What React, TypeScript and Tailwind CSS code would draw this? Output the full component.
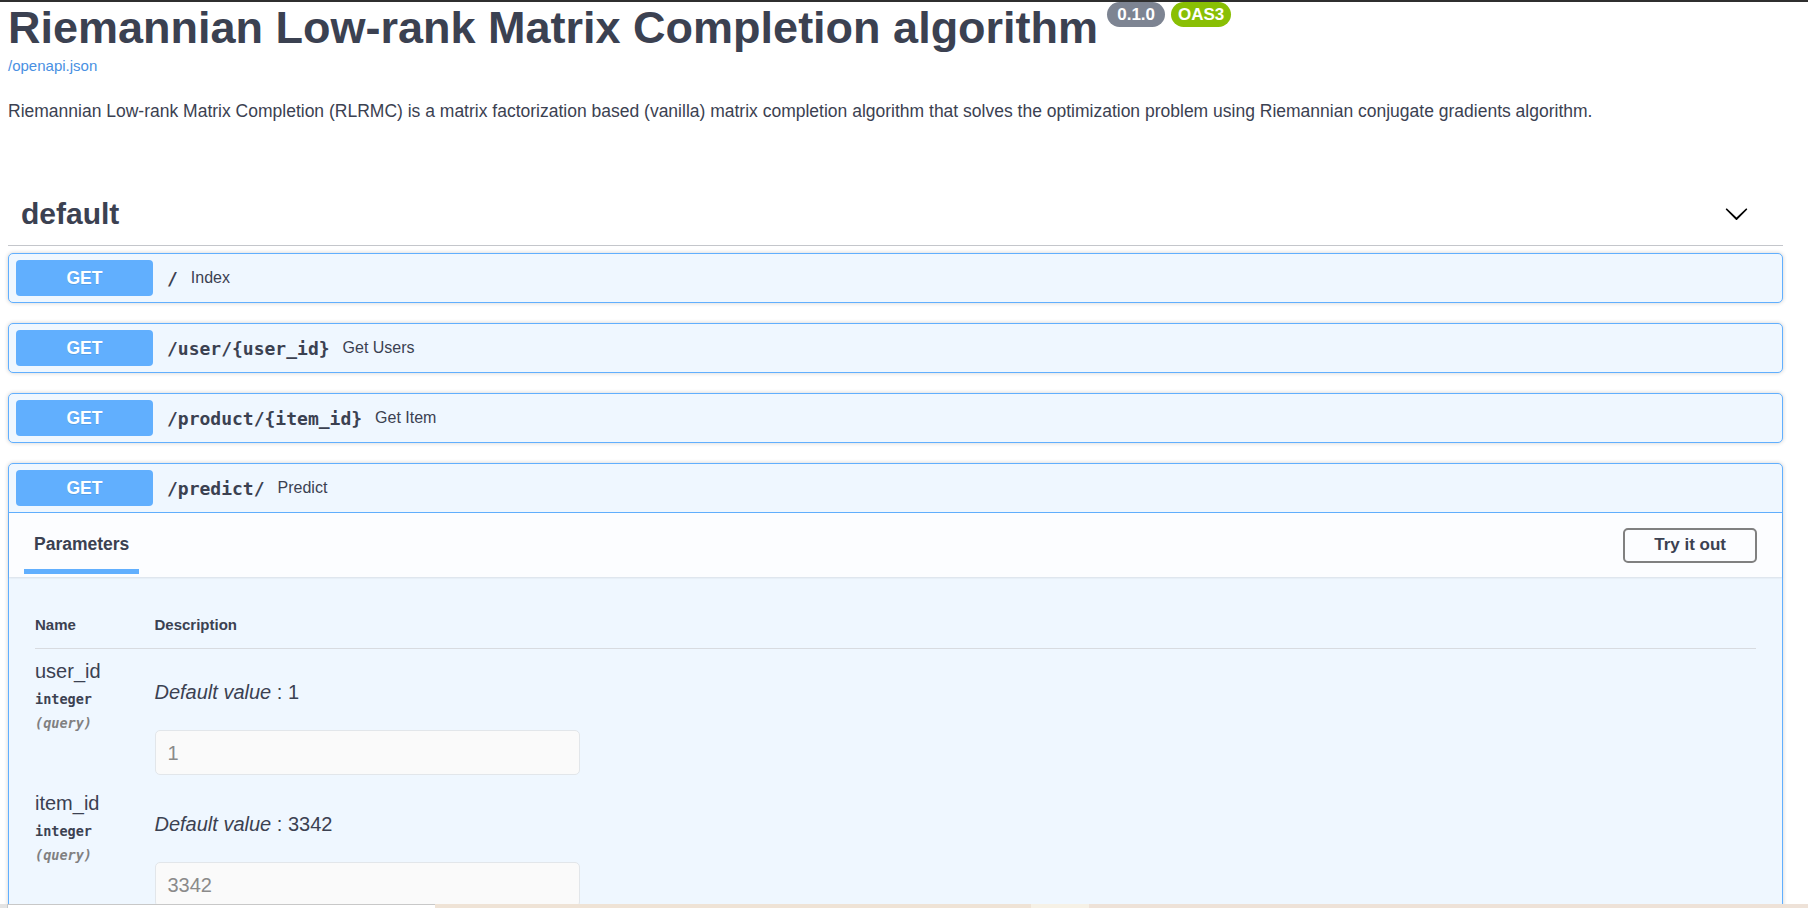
import React from "react";

const ops = [
  { path: "/", summary: "Index" },
  { path: "/user/{user_id}", summary: "Get Users" },
  { path: "/product/{item_id}", summary: "Get Item" },
];

const params = [
  { name: "user_id", value: "1" },
  { name: "item_id", value: "3342" },
];

function SummaryRow({ path, summary, open }: { path: string; summary: string; open?: boolean }) {
  return (
    <div className={`flex items-center pl-[7px] ${open ? "h-[49px] border-b border-[#61affe]" : "h-[48px]"}`}>
      <span className="flex h-[36px] w-[137px] items-center justify-center rounded-[4px] bg-[#61affe] text-[17.5px] font-bold text-white [text-shadow:0_1px_0_rgba(0,0,0,0.1)]">
        GET
      </span>
      <span className="pl-[14px] pr-[13px] font-['DejaVu_Sans_Mono',monospace] text-[18px] font-bold text-[#3b4151]">
        {path}
      </span>
      <span className="text-[16px] text-[#3b4151]">{summary}</span>
    </div>
  );
}

function Chevron() {
  return (
    <svg width="25" height="25" viewBox="0 0 20 20" className="shrink-0">
      <path
        fill="#000"
        d="M17.418 6.109c.272-.268.709-.268.979 0s.271.701 0 .969l-7.908 7.83c-.27.268-.707.268-.979 0l-7.908-7.83c-.27-.268-.27-.701 0-.969.271-.268.709-.268.979 0L10 13.25l7.418-7.141z"
      />
    </svg>
  );
}

export default function App() {
  return (
    <div className="relative h-[908px] overflow-hidden bg-white font-['Liberation_Sans',Arial,sans-serif] text-[#3b4151]">
      <div className="h-[2px] bg-[#2f2f2f]" />
      <div className="w-[1783px] pl-[8px]">
        {/* info */}
        <div className="flex items-start">
          <h2 className="text-[45px] font-bold leading-[51px]">Riemannian Low-rank Matrix Completion algorithm</h2>
          <span className="ml-[9px] flex h-[25px] w-[58px] items-center justify-center rounded-full bg-[#7d8492] text-[17px] font-bold text-white">
            0.1.0
          </span>
          <span className="ml-[6px] flex h-[25px] w-[60px] items-center justify-center rounded-full bg-[#89bf04] text-[17px] font-bold text-white">
            OAS3
          </span>
        </div>
        <a className="mt-[3px] block text-[15px] leading-[20px] text-[#4990e2]">/openapi.json</a>
        <p className="mt-[23px] text-[17.5px] leading-[24px]">
          Riemannian Low-rank Matrix Completion (RLRMC) is a matrix factorization based (vanilla) matrix completion algorithm that solves the optimization problem using Riemannian conjugate gradients algorithm.
        </p>

        {/* tag */}
        <div className="mt-[58px] flex h-[65px] items-center justify-between border-b border-[#c4c6cb] pl-[13px] pr-[34px]">
          <h3 className="text-[30px] font-bold">default</h3>
          <Chevron />
        </div>

        <div className="mt-[7px] flex flex-col gap-[20px]">
          {ops.map((op) => (
            <div
              key={op.path}
              className="rounded-[5px] border border-[#61affe] bg-[#eff7ff] shadow-[0_0_4px_rgba(0,0,0,0.19)]"
            >
              <SummaryRow path={op.path} summary={op.summary} />
            </div>
          ))}

          <div className="rounded-[5px] border border-[#61affe] bg-[#eff7ff] shadow-[0_0_4px_rgba(0,0,0,0.19)]">
            <SummaryRow path="/predict/" summary="Predict" open />

            <div className="flex h-[64px] items-center justify-between bg-[#fcfdff] pl-[25px] pr-[25px] shadow-[0_1px_2px_rgba(0,0,0,0.1)]">
              <div className="flex flex-col self-stretch justify-end pb-[3px]">
                <h4 className="mb-[15px] text-[17.5px] font-bold leading-[20px]">Parameters</h4>
                <div className="-mx-[10px] h-[5px] bg-[#61affe]" />
              </div>
              <button className="h-[35px] rounded-[5px] border-2 border-[#808080] px-[29px] text-[17px] font-bold text-[#3b4151]">
                Try it out
              </button>
            </div>

            <div className="pb-[60px] pl-[26px] pr-[26px] pt-[25px]">
              <div className="grid grid-cols-[119.5px_1fr] border-b border-[#d8dbe0] pb-[15px] pt-[15px] text-[15px] font-bold leading-[16px]">
                <span>Name</span>
                <span>Description</span>
              </div>
              {params.map((p) => (
                <div key={p.name} className="grid grid-cols-[119.5px_1fr] pb-[6px] pt-[11px]">
                  <div>
                    <div className="text-[20px] leading-[23px]">{p.name}</div>
                    <div className="mt-[7px] font-['DejaVu_Sans_Mono',monospace] text-[13.5px] font-bold leading-[18px]">
                      integer
                    </div>
                    <div className="mt-[6px] font-['DejaVu_Sans_Mono',monospace] text-[13.5px] font-semibold italic leading-[18px] text-[#808080]">
                      (query)
                    </div>
                  </div>
                  <div>
                    <p className="mt-[20px] text-[20px] leading-[24px]">
                      <i>Default value</i> : {p.value}
                    </p>
                    <div className="mt-[26px] flex h-[45px] w-[425px] items-center rounded-[5px] border border-[#e2e6ea] bg-[#fafafa] pl-[12px] text-[20px] text-[#8a8a8a]">
                      {p.value}
                    </div>
                  </div>
                </div>
              ))}
            </div>
          </div>
        </div>
      </div>

      {/* bottom strip overlay */}
      <div className="absolute bottom-0 left-0 right-0 flex h-[4px]">
        <div className="w-[7px] bg-[#e3e3e3]" />
        <div className="w-[428px] border-l border-t border-[#c8c8c8] bg-white" />
        <div className="w-[596px] bg-[#efe3d6]" />
        <div className="w-[58px] bg-[#f6f1e6]" />
        <div className="flex-1 bg-[#eee2d8]" />
      </div>
    </div>
  );
}
